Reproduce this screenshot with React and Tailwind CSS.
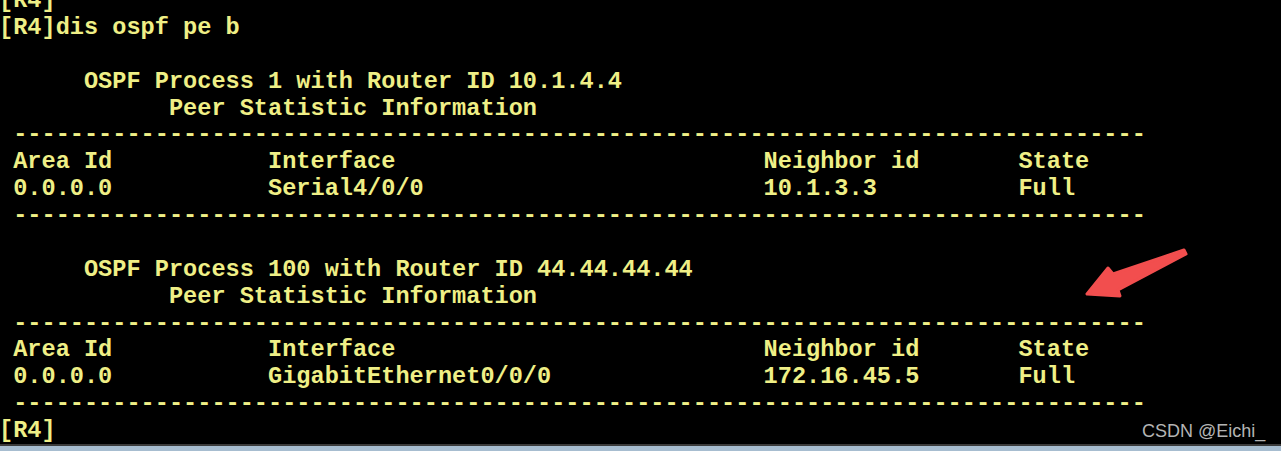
const dashes = " " + "-".repeat(80);

const lines = [
  "[R4]",
  "[R4]dis ospf pe b",
  "",
  "      OSPF Process 1 with Router ID 10.1.4.4",
  "            Peer Statistic Information",
  dashes,
  " Area Id           Interface                          Neighbor id       State",
  " 0.0.0.0           Serial4/0/0                        10.1.3.3          Full",
  dashes,
  "",
  "      OSPF Process 100 with Router ID 44.44.44.44",
  "            Peer Statistic Information",
  dashes,
  " Area Id           Interface                          Neighbor id       State",
  " 0.0.0.0           GigabitEthernet0/0/0               172.16.45.5       Full",
  dashes,
  "[R4]",
];

export default function App() {
  return (
    <div className="relative w-[1281px] h-[451px] bg-black flex flex-col overflow-hidden">
      {/* terminal output */}
      <div className="flex-1 overflow-hidden">
        <pre
          className="mt-[-12px] ml-[-1px] text-[23.6px] leading-[26.87px] font-bold text-[#efef86] whitespace-pre"
          style={{ fontFamily: '"Liberation Mono", "Courier New", monospace' }}
        >
          {lines.join("\n")}
        </pre>
      </div>

      {/* window edge */}
      <div className="h-[2px] bg-[#3b3b3b]"></div>
      <div className="h-[5px] bg-[#a7bdd0]"></div>

      {/* annotation arrow */}
      <svg
        className="absolute left-[1080px] top-[240px]"
        width="110"
        height="65"
        viewBox="0 0 110 65"
      >
        <polygon
          points="104,10 33,34 28,28 7,54 40,56 38,50 106,14"
          fill="#f24e4e"
          stroke="#f24e4e"
          strokeWidth="3"
          strokeLinejoin="round"
        />
      </svg>

      {/* watermark */}
      <span
        className="absolute left-[1142px] top-[420px] text-[18px] leading-[22px] text-[#b4b4b4]"
        style={{ fontFamily: '"Liberation Sans", Arial, sans-serif' }}
      >
        CSDN @Eichi_
      </span>
    </div>
  );
}
